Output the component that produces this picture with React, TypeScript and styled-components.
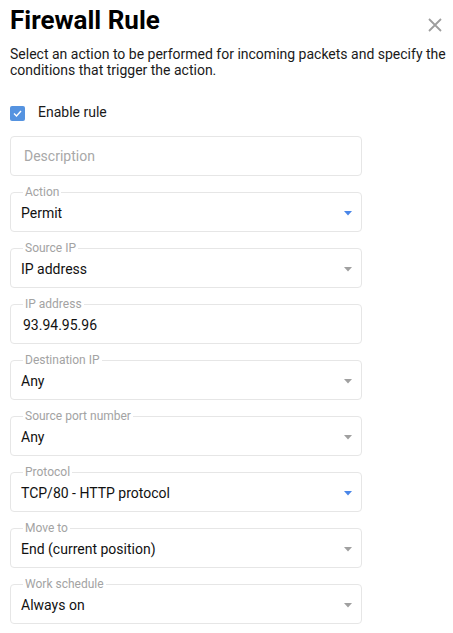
import React from 'react';
import styled, { createGlobalStyle } from 'styled-components';

const GlobalStyle = createGlobalStyle`
  body {
    margin: 0;
    background: #fff;
    font-family: Roboto, "Liberation Sans", sans-serif;
    color: #1a1a1a;
  }
`;

interface FieldData {
  label: string;
  value: string;
  select?: boolean;
  active?: boolean;
}

const fields: FieldData[] = [
  { label: 'Action', value: 'Permit', select: true, active: true },
  { label: 'Source IP', value: 'IP address', select: true },
  { label: 'IP address', value: '93.94.95.96' },
  { label: 'Destination IP', value: 'Any', select: true },
  { label: 'Source port number', value: 'Any', select: true },
  { label: 'Protocol', value: 'TCP/80 - HTTP protocol', select: true, active: true },
  { label: 'Move to', value: 'End (current position)', select: true },
  { label: 'Work schedule', value: 'Always on', select: true },
];

const Dialog = {
  Page: styled.div`
    width: 453px;
    padding: 4px 0 0 10px;
    box-sizing: border-box;
  `,
  Header: styled.div`
    display: flex;
    flex-direction: row;
    justify-content: space-between;
    align-items: center;
    padding-right: 10px;
  `,
  Title: styled.h1`
    margin: 0;
    font-size: 26px;
    line-height: 32px;
    font-weight: 700;
    color: #000;
  `,
  Close: styled.button`
    border: 0;
    background: none;
    padding: 0;
    width: 14px;
    height: 14px;
    margin: 10px 1px 0 0;
    cursor: pointer;
    display: flex;
  `,
  Intro: styled.p`
    margin: 10px 0 0 0;
    font-size: 14px;
    line-height: 16px;
    color: #1a1a1a;
  `,
  CheckRow: styled.label`
    display: flex;
    flex-direction: row;
    align-items: center;
    gap: 13px;
    height: 20px;
    margin-top: 24px;
    font-size: 14px;
  `,
  Box: styled.span`
    width: 15px;
    height: 15px;
    border-radius: 2px;
    background: #5593e0;
    display: flex;
    align-items: center;
    justify-content: center;
    margin-top: 2px;
  `,
  Form: styled.div`
    display: flex;
    flex-direction: column;
    gap: 9px;
    width: 352px;
    margin-top: 14px;
  `,
  Plain: styled.div`
    height: 40px;
    box-sizing: border-box;
    border: 1px solid #e6e6e6;
    border-radius: 4px;
    padding: 0 13px;
    display: flex;
    align-items: center;
    font-size: 14px;
    color: #a8a8a8;
  `,
  Fieldset: styled.fieldset`
    margin: 0;
    border: 1px solid #e6e6e6;
    border-radius: 4px;
    padding: 5px 9px 9px 10px;
    min-width: 0;
  `,
  Legend: styled.legend`
    margin-left: 2px;
    padding: 0 2px;
    font-size: 12px;
    line-height: 14px;
    color: #a3a3a3;
  `,
  Row: styled.div<{ $input?: boolean }>`
    display: flex;
    flex-direction: row;
    justify-content: space-between;
    align-items: center;
    height: 18px;
    font-size: 14px;
    line-height: 18px;
    color: #111;
    padding-left: ${p => (p.$input ? '2px' : '0')};
  `,
};

const Caret: React.FC<{ active?: boolean }> = ({ active }) => (
  <svg width="8" height="5" viewBox="0 0 8 5">
    <polygon points="0,0 8,0 4,4.5" fill={active ? '#4a86e8' : '#a0a0a0'} />
  </svg>
);

const Field: React.FC<{ data: FieldData }> = ({ data }) => (
  <Dialog.Fieldset>
    <Dialog.Legend>{data.label}</Dialog.Legend>
    <Dialog.Row $input={!data.select}>
      <span>{data.value}</span>
      {data.select && <Caret active={data.active} />}
    </Dialog.Row>
  </Dialog.Fieldset>
);

const App: React.FC = () => {
  return (
    <Dialog.Page>
      <GlobalStyle />
      <Dialog.Header>
        <Dialog.Title>Firewall Rule</Dialog.Title>
        <Dialog.Close aria-label="close">
          <svg width="14" height="14" viewBox="0 0 14 14">
            <path d="M1 1 L13 13 M13 1 L1 13" stroke="#9e9e9e" strokeWidth="1.8" />
          </svg>
        </Dialog.Close>
      </Dialog.Header>
      <Dialog.Intro>
        Select an action to be performed for incoming packets and specify the conditions that trigger the action.
      </Dialog.Intro>
      <Dialog.CheckRow>
        <Dialog.Box>
          <svg width="9" height="7" viewBox="0 0 9 7">
            <path d="M1 3.5 L3.5 6 L8 1" stroke="#fff" strokeWidth="1.4" fill="none" />
          </svg>
        </Dialog.Box>
        Enable rule
      </Dialog.CheckRow>
      <Dialog.Form>
        <Dialog.Plain>Description</Dialog.Plain>
        {fields.map(f => (
          <Field key={f.label} data={f} />
        ))}
      </Dialog.Form>
    </Dialog.Page>
  );
};

export default App;
